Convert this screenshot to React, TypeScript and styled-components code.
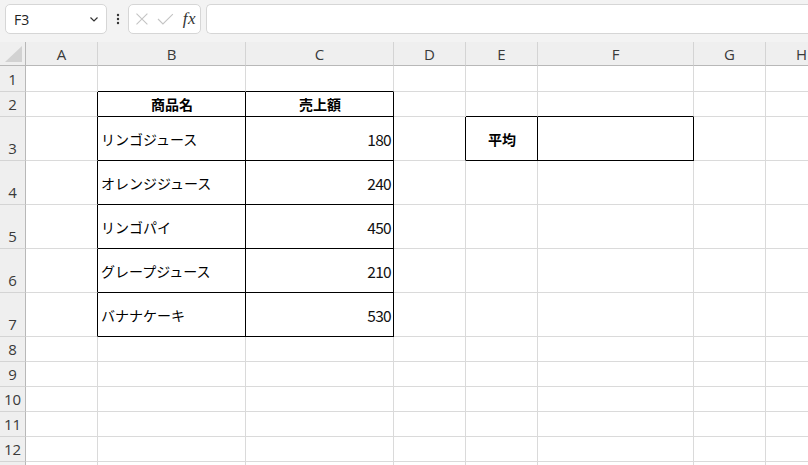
import * as React from 'react'
import styled, { createGlobalStyle } from 'styled-components'

const GlobalStyle = createGlobalStyle`
  html, body {
    margin: 0;
    padding: 0;
    background: #f3f3f3;
    overflow: hidden;
  }
  * { box-sizing: border-box; }
`

const JP = `"Noto Sans CJK JP", "Noto Sans", sans-serif`
const UI = `"Open Sans", "Noto Sans", sans-serif`

const Page = styled.div`
  width: 808px;
  height: 465px;
  display: flex;
  flex-direction: column;
  overflow: hidden;
  background: #f3f3f3;
`

const Toolbar = styled.div`
  flex: 0 0 42px;
  height: 42px;
  display: flex;
  align-items: flex-start;
  padding: 4px 0 0 5px;
`

const Box = styled.div`
  height: 30px;
  background: #fff;
  border: 1px solid #d6d6d6;
  border-radius: 5px;
  display: flex;
  align-items: center;
`

const NameBox = styled(Box)`
  width: 102px;
  padding: 0 6px 0 8px;
  justify-content: space-between;
  font-family: ${UI};
  font-size: 14px;
  color: #222;
`

const Dots = styled.div`
  width: 21px;
  height: 30px;
  display: flex;
  align-items: center;
  justify-content: center;
`

const FxBox = styled(Box)`
  width: 73px;
  padding: 0 4px 0 6px;
  gap: 8px;
`

const FxText = styled.span`
  font-family: "Liberation Serif", serif;
  font-style: italic;
  font-size: 17px;
  color: #333;
  margin-left: 1px;
  letter-spacing: 0.5px;
`

const FormulaBox = styled(Box)`
  flex: 1;
  margin-left: 5px;
  border-right: none;
  border-radius: 5px 0 0 5px;
`

const Sheet = styled.div`
  flex: 0 0 auto;
  display: grid;
  grid-template-columns: 26px 72px 148px 148px 72px 72px 156px 72px 72px;
  grid-template-rows: 24px 26px 25px 44px 44px 44px 44px 44px 25px 25px 25px 25px 25px 25px;
  background: #fff;
`

const Corner = styled.div`
  background: #efefef;
  border-right: 1px solid #b8b8b8;
  border-bottom: 1px solid #b8b8b8;
  display: flex;
  align-items: flex-end;
  justify-content: flex-end;
  padding: 0 3px 3px 0;
`

const ColHead = styled.div`
  background: #efefef;
  border-right: 1px solid #d4d4d4;
  border-bottom: 1px solid #b8b8b8;
  display: flex;
  align-items: center;
  justify-content: center;
  font-family: ${UI};
  font-size: 15px;
  color: #3a3a3a;
`

const RowHead = styled.div`
  background: #efefef;
  border-right: 1px solid #b8b8b8;
  border-bottom: 1px solid #d4d4d4;
  display: flex;
  align-items: flex-end;
  justify-content: center;
  padding-bottom: 3px;
  font-family: ${UI};
  font-size: 15px;
  line-height: 18px;
  color: #3a3a3a;
`

const Cell = styled.div<{ $right: boolean; $bottom: boolean; $align: string; $bold?: boolean }>`
  border-right: 1px solid ${(p) => (p.$right ? '#000' : '#dadada')};
  border-bottom: 1px solid ${(p) => (p.$bottom ? '#000' : '#dadada')};
  display: flex;
  align-items: center;
  justify-content: ${(p) => p.$align};
  padding: 0 2px 0 3px;
  font-family: ${JP};
  font-size: 14px;
  font-weight: ${(p) => (p.$bold ? 700 : 400)};
  color: #000;
  white-space: nowrap;
  overflow: hidden;
`

const Num = styled.span`
  font-size: 15.5px;
  letter-spacing: -0.7px;
  color: #111;
`

const cols = ['A', 'B', 'C', 'D', 'E', 'F', 'G', 'H']
const rowCount = 13

type Val = { text: string; align?: string; bold?: boolean; num?: boolean }

const data: Record<string, Val> = {
  B2: { text: '商品名', align: 'center', bold: true },
  C2: { text: '売上額', align: 'center', bold: true },
  B3: { text: 'リンゴジュース' },
  C3: { text: '180', align: 'flex-end', num: true },
  B4: { text: 'オレンジジュース' },
  C4: { text: '240', align: 'flex-end', num: true },
  B5: { text: 'リンゴパイ' },
  C5: { text: '450', align: 'flex-end', num: true },
  B6: { text: 'グレープジュース' },
  C6: { text: '210', align: 'flex-end', num: true },
  B7: { text: 'バナナケーキ' },
  C7: { text: '530', align: 'flex-end', num: true },
  E3: { text: '平均', align: 'center', bold: true },
}

function boxed(c: number, r: number) {
  if ((c === 1 || c === 2) && r >= 2 && r <= 7) return true
  if ((c === 4 || c === 5) && r === 3) return true
  return false
}

function Chevron() {
  return (
    <svg width="12" height="12" viewBox="0 0 12 12" fill="none" stroke="#333" strokeWidth="1.2">
      <path d="M2.5 4.5 L6 8 L9.5 4.5" />
    </svg>
  )
}

function VDots() {
  return (
    <svg width="4" height="12" viewBox="0 0 4 12" fill="#333">
      <circle cx="2" cy="2" r="1.2" />
      <circle cx="2" cy="6" r="1.2" />
      <circle cx="2" cy="10" r="1.2" />
    </svg>
  )
}

function Cross() {
  return (
    <svg width="14" height="14" viewBox="0 0 14 14" fill="none" stroke="#c4c4c4" strokeWidth="1.1">
      <path d="M1.5 1.5 L12.5 12.5 M12.5 1.5 L1.5 12.5" />
    </svg>
  )
}

function Check() {
  return (
    <svg width="17" height="14" viewBox="0 0 17 14" fill="none" stroke="#c4c4c4" strokeWidth="1.1">
      <path d="M1 7 L6 12 L16 2" />
    </svg>
  )
}

function CornerMark() {
  return (
    <svg width="17" height="16" viewBox="0 0 17 16">
      <path d="M17 0 L17 16 L0 16 Z" fill="#d2d2d2" />
    </svg>
  )
}

export default function App() {
  const cells: React.ReactNode[] = []
  cells.push(
    <Corner key="corner">
      <CornerMark />
    </Corner>
  )
  cols.forEach((c) => cells.push(<ColHead key={c}>{c}</ColHead>))
  for (let r = 1; r <= rowCount; r++) {
    // row 13 only peeks in at the bottom edge, so its number stays hidden
    cells.push(<RowHead key={'r' + r}>{r < rowCount ? r : ''}</RowHead>)
    cols.forEach((c, ci) => {
      const v = data[c + r]
      const right = boxed(ci, r) || boxed(ci + 1, r)
      const bottom = boxed(ci, r) || boxed(ci, r + 1)
      cells.push(
        <Cell
          key={c + r}
          $right={right}
          $bottom={bottom}
          $align={v?.align ?? 'flex-start'}
          $bold={v?.bold}
        >
          {v?.num ? <Num>{v.text}</Num> : v?.text}
        </Cell>
      )
    })
  }

  return (
    <Page>
      <GlobalStyle />
      <Toolbar>
        <NameBox>
          <span>F3</span>
          <Chevron />
        </NameBox>
        <Dots>
          <VDots />
        </Dots>
        <FxBox>
          <Cross />
          <Check />
          <FxText>fx</FxText>
        </FxBox>
        <FormulaBox />
      </Toolbar>
      <Sheet>{cells}</Sheet>
    </Page>
  )
}
